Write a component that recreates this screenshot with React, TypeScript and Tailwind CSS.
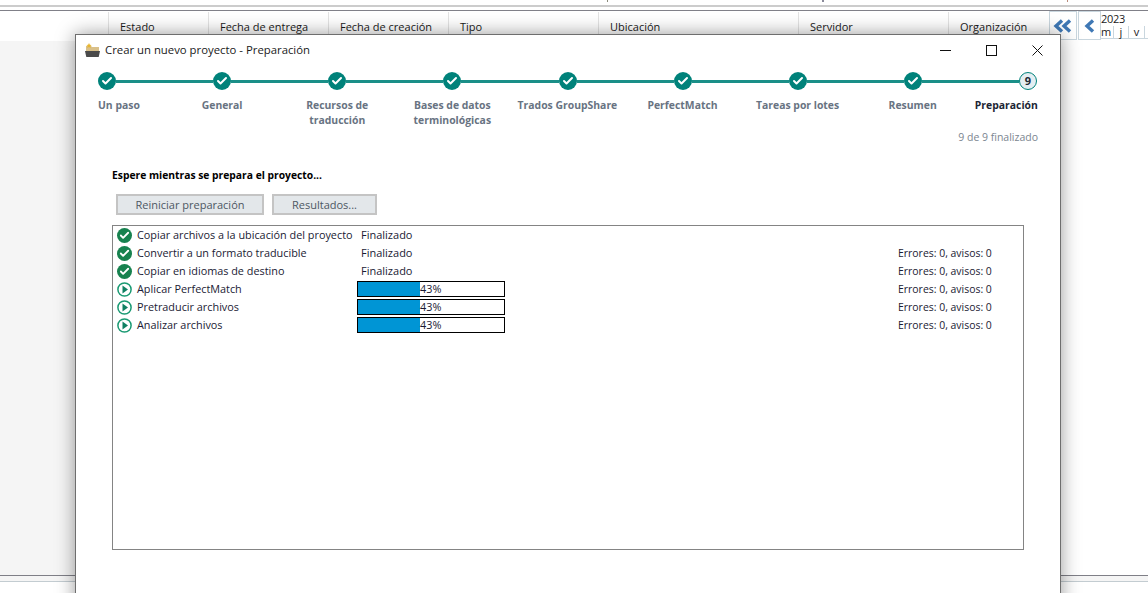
import { Check } from "lucide-react";

const font = { fontFamily: '"Open Sans", "Noto Sans", sans-serif' };

const columns = [
  { label: "Estado", width: "w-[100px]" },
  { label: "Fecha de entrega", width: "w-[120px]" },
  { label: "Fecha de creación", width: "w-[120px]" },
  { label: "Tipo", width: "w-[150px]" },
  { label: "Ubicación", width: "w-[200px]" },
  { label: "Servidor", width: "w-[150px]" },
  { label: "Organización", width: "w-[100px]" },
];

const steps = [
  "Un paso",
  "General",
  "Recursos de traducción",
  "Bases de datos terminológicas",
  "Trados GroupShare",
  "PerfectMatch",
  "Tareas por lotes",
  "Resumen",
  "Preparación",
];

const tasks = [
  { name: "Copiar archivos a la ubicación del proyecto", done: true, notes: false },
  { name: "Convertir a un formato traducible", done: true, notes: true },
  { name: "Copiar en idiomas de destino", done: true, notes: true },
  { name: "Aplicar PerfectMatch", done: false, notes: true },
  { name: "Pretraducir archivos", done: false, notes: true },
  { name: "Analizar archivos", done: false, notes: true },
];

function StepDot({ last }: { last: boolean }) {
  if (last) {
    return (
      <div className="flex h-[18px] w-[18px] shrink-0 items-center justify-center rounded-full border border-[#00827a] bg-[#e4eef2] text-[11px] font-bold text-[#1f2a36]">
        9
      </div>
    );
  }
  return (
    <div className="flex h-[18px] w-[18px] shrink-0 items-center justify-center rounded-full bg-[#00827a]">
      <Check size={12} strokeWidth={4} className="text-white" />
    </div>
  );
}

function TaskIcon({ done }: { done: boolean }) {
  if (done) {
    return (
      <div className="flex h-[15px] w-[15px] shrink-0 items-center justify-center rounded-full bg-[#17824f]">
        <Check size={11} strokeWidth={4} className="text-white" />
      </div>
    );
  }
  return (
    <svg width="15" height="15" viewBox="0 0 15 15" className="shrink-0">
      <circle cx="7.5" cy="7.5" r="6.6" fill="white" stroke="#1a9a73" strokeWidth="1.5" />
      <path d="M5.5 3.6L11 7.5 5.5 11.4z" fill="#0f8062" />
    </svg>
  );
}

function FolderIcon() {
  return (
    <svg width="15" height="15" viewBox="0 0 15 15" className="shrink-0">
      <path d="M1 3h5l1 1h7v4H1z" fill="#d9c08a" />
      <path d="M4 0l.8 1.7 1.8.2-1.3 1.2.4 1.8L4 4l-1.7.9.4-1.8L1.4 1.9l1.8-.2z" fill="#e8b52e" />
      <path d="M0 8h15l-1.3 6H1.3z" fill="#4a4a4a" />
    </svg>
  );
}

function Chevron({ double }: { double?: boolean }) {
  return (
    <svg width={double ? 20 : 12} height="14" viewBox={double ? "0 0 20 14" : "0 0 12 14"} fill="none" stroke="#3f78b5" strokeWidth="3.4">
      <path d="M9 1.5L3 7l6 5.5" />
      {double && <path d="M17 1.5L11 7l6 5.5" />}
    </svg>
  );
}

function WindowButtons() {
  return (
    <div className="ml-auto flex items-center text-[#111111]">
      <div className="flex w-[46px] justify-center">
        <svg width="11" height="11" viewBox="0 0 11 11" stroke="currentColor" fill="none">
          <path d="M0 5.5h11" />
        </svg>
      </div>
      <div className="flex w-[46px] justify-center">
        <svg width="11" height="11" viewBox="0 0 11 11" stroke="currentColor" fill="none">
          <rect x="0.5" y="0.5" width="10" height="10" />
        </svg>
      </div>
      <div className="flex w-[46px] justify-center">
        <svg width="11" height="11" viewBox="0 0 11 11" stroke="currentColor" fill="none">
          <path d="M0.5 0.5l10 10M10.5 0.5l-10 10" />
        </svg>
      </div>
    </div>
  );
}

export default function App() {
  return (
    <div className="relative flex h-[593px] w-[1148px] flex-col overflow-hidden bg-white text-[11px]" style={font}>
      <div className="flex h-[5px] items-start">
        <div className="ml-[607px] h-[2px] w-[1px] bg-[#8a8a7a]" />
        <div className="ml-[214px] h-[2px] w-[2px] bg-[#8a8a9a]" />
        <div className="ml-[243px] h-[2px] w-[1px] bg-[#b98a7a]" />
      </div>
      <div className="h-[2px] bg-[#cccccc]" />
      <div className="mt-[3px] flex h-[31px] border-t border-[#808088] bg-white">
        <div className="w-[108px] shrink-0" />
        {columns.map((c) => (
          <div key={c.label} className={`${c.width} mt-[1px] shrink-0 border-l border-[#e3e3e3] pl-[11px] pt-[7px] leading-[16px] text-[#1a1a1a]`}>
            {c.label}
          </div>
        ))}
        <div className="ml-[1px] flex h-[29px] w-[28px] items-center justify-center border border-[#c9d6de]">
          <Chevron double />
        </div>
        <div className="ml-[1px] flex h-[29px] w-[23px] items-center justify-center border border-[#c9d6de]">
          <Chevron />
        </div>
        <div className="flex-1 overflow-hidden leading-none text-[#1a1a1a]">
          <div className="h-[15px] pt-[2px] tracking-[-0.3px]">2023</div>
          <div className="flex h-[13px] border-b border-[#c9d6de] text-[11px] leading-[12px]">
            <span className="w-[13px] border-r border-[#c9d6de]">m</span>
            <span className="w-[15px] border-r border-[#c9d6de] text-center">j</span>
            <span className="w-[16px] border-r border-[#c9d6de] text-center">v</span>
          </div>
        </div>
      </div>
      <div className="flex h-[534px]">
        <div className="w-[300px] bg-[#f5f5f5]" />
        <div className="flex-1 bg-white" />
      </div>
      <div className="h-[7px] border-y border-t-[#7f7f87] border-b-[#c3ccd1] bg-[#f5f5f5]" />
      <div className="flex-1 bg-white" />

      <div className="absolute left-[75px] top-[34px] flex h-[640px] w-[986px] flex-col border border-[#6e6e6e] bg-white shadow-[0_0_18px_rgba(0,0,0,0.4)]">
        <div className="flex h-[30px] items-center pl-[9px]">
          <FolderIcon />
          <span className="ml-[5px] text-[11.35px] text-[#1a1a1a]">Crear un nuevo proyecto - Preparación</span>
          <WindowButtons />
        </div>

        <div className="mt-[7px] flex items-center pl-[22px] pr-[23px]">
          {steps.map((s, i) => (
            <div key={s} className={i === 8 ? "contents" : "flex flex-1 items-center"}>
              <StepDot last={i === 8} />
              {i < 8 && <div className="h-[3px] flex-1 bg-[#1a8f88]" />}
            </div>
          ))}
        </div>

        <div className="mt-[8px] grid h-[32px] grid-cols-[66.6px_repeat(7,115.1px)_67.6px] pl-[22px] text-[10.4px] font-bold leading-[15px] text-[#687382]">
          {steps.map((s, i) => (
            <div key={s} className={i === 0 ? "text-left" : i === 8 ? "whitespace-nowrap text-right text-[#1b2533]" : "px-[15px] text-center"}>
              {i === 4 || i === 6 ? <span className="-mx-[10px] block whitespace-nowrap">{s}</span> : s}
            </div>
          ))}
        </div>

        <div className="pr-[22px] text-right text-[10.5px] leading-[15px] text-[#7b8590]">9 de 9 finalizado</div>

        <div className="ml-[36px] mt-[23px] text-[10.3px] font-bold leading-[15px] text-black">Espere mientras se prepara el proyecto...</div>

        <div className="ml-[40px] mt-[11px] flex gap-[8px]">
          <button className="h-[21px] w-[148px] border-2 border-[#c4c4c4] bg-[#e3e7ea] text-[11px] leading-none text-[#4d5763]">Reiniciar preparación</button>
          <button className="h-[21px] w-[105px] border-2 border-[#c4c4c4] bg-[#e3e7ea] text-[11px] leading-none text-[#4d5763]">Resultados...</button>
        </div>

        <div className="ml-[36px] mt-[10px] h-[325px] w-[912px] border border-[#848484] pl-[4px] text-[10.85px] text-[#1a1a33]">
          {tasks.map((t) => (
            <div key={t.name} className="flex h-[18px] items-center">
              <TaskIcon done={t.done} />
              <span className="ml-[5px] w-[220px] shrink-0 whitespace-nowrap">{t.name}</span>
              {t.done ? (
                <span className="w-[541px] shrink-0 pl-[4px] text-[11px]">Finalizado</span>
              ) : (
                <div className="mr-[393px] flex h-[16px] w-[148px] shrink-0 border border-black">
                  <div className="w-[62px] bg-[#0095d5]" />
                  <span className="leading-[14px]">43%</span>
                </div>
              )}
              {t.notes && <span className="whitespace-nowrap pt-[1px] text-[10.45px]">Errores: 0, avisos: 0</span>}
            </div>
          ))}
        </div>
      </div>
    </div>
  );
}
